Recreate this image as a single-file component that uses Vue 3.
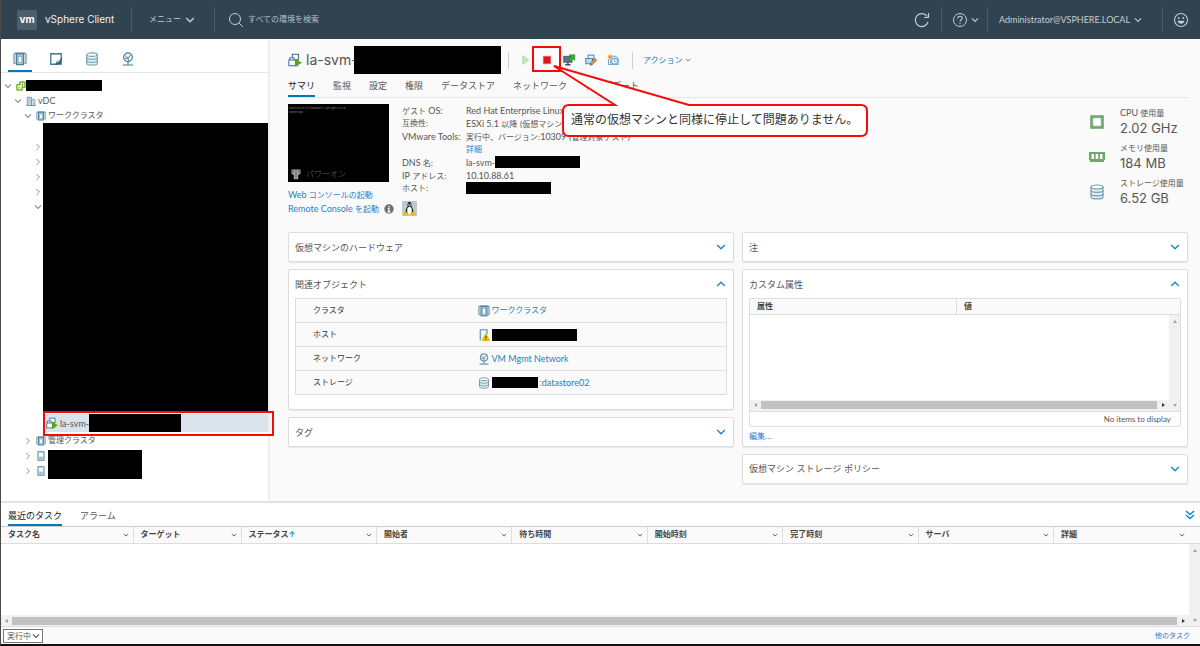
<template>
  <div class="page">
    <svg class="sprite" aria-hidden="true">
      <symbol id="chev" viewBox="0 0 10 10">
        <path d="M1.2 3 5 6.8 8.800 3" fill="none" stroke="currentColor" stroke-width="1.4" />
      </symbol>
      <symbol id="chev-up" viewBox="0 0 10 10">
        <path d="M1.2 7 5 3.200 8.800 7" fill="none" stroke="currentColor" stroke-width="1.4" />
      </symbol>
      <symbol id="chev-right" viewBox="0 0 10 10">
        <path d="M3 1.200 6.800 5 3 8.800" fill="none" stroke="currentColor" stroke-width="1.2" />
      </symbol>
      <symbol id="cluster" viewBox="0 0 16 16">
        <path d="M3 2H1v11h2M13 2h2v11h-2" fill="#bfd3de" stroke="#5d8ba5" />
        <rect x="4" y="2" width="8" height="12.500" fill="#a9c5d3" stroke="#4a7d97" stroke-width="1.400" />
        <path d="M2 1.200h12" stroke="#4a7d97" stroke-width="1.200" />
        <rect x="6" y="5" width="4" height="7" fill="#fff" stroke="#7fa5b9" stroke-width=".8" />
      </symbol>
      <symbol id="host" viewBox="0 0 16 16">
        <rect x="3" y="1" width="10" height="14" fill="#c4d8e2" stroke="#6f97ac" stroke-width="1.500" />
        <rect x="5" y="3.500" width="6" height="5" fill="#fff" />
        <path d="M5.500 11.500h5" stroke="#6f97ac" stroke-width="1.400" />
      </symbol>
      <symbol id="host-warn" viewBox="0 0 16 16">
        <path d="M3 15V1h9v6" fill="#eef4f7" stroke="#5d8ba5" stroke-width="1.500" />
        <path d="M10.500 6 16 15.500H5z" fill="#f5c400" stroke="#c79500" stroke-width=".6" />
        <path d="M10.500 9v3.500M10.500 13.300v1.200" stroke="#333" stroke-width="1.300" />
      </symbol>
      <symbol id="note" viewBox="0 0 16 16">
        <path d="M2 2h12v7l-5 5H2z" fill="none" stroke="#417691" stroke-width="1.500" />
        <path d="M14.500 6.500v8H7l2-4.500 3-1z" fill="#2e6480" />
        <path d="M9 12 12 9" stroke="#fff" stroke-width="1.200" />
      </symbol>
      <symbol id="disks" viewBox="0 0 16 16">
        <path d="M2 3v10c0 2.600 12 2.600 12 0V3" fill="#e3edf2" stroke="#6f9ab0" stroke-width="1.200" />
        <ellipse cx="8" cy="3" rx="6" ry="2" fill="#fff" stroke="#6f9ab0" stroke-width="1.200" />
        <path d="M2 6.500c0 2.400 12 2.400 12 0M2 10c0 2.400 12 2.400 12 0" fill="none" stroke="#6f9ab0" stroke-width="1.200" />
      </symbol>
      <symbol id="network" viewBox="0 0 16 16">
        <circle cx="8" cy="6" r="5" fill="#e8f0f4" stroke="#4a7d97" stroke-width="1.300" />
        <path d="M4.500 4 8 7l3.500-4M8 7l1 3.500M4 8l4-1" fill="none" stroke="#4a7d97" />
        <path d="M8 11v3.500M2 14.800h12" stroke="#4a7d97" stroke-width="1.300" />
      </symbol>
      <symbol id="vcenter" viewBox="0 0 16 16">
        <rect x="6" y="1.500" width="8.500" height="8.500" rx="1" fill="#fff" stroke="#6dbb20" stroke-width="2.400" />
        <rect x="1.500" y="6" width="8.500" height="8.500" rx="1" fill="#fff" stroke="#6dbb20" stroke-width="2.400" />
        <rect x="6.500" y="6" width="3" height="3" fill="#fff" />
        <path d="M9 3.500h3v3H9zM4 9h3v3H4z" fill="#f7a823" />
      </symbol>
      <symbol id="datacenter" viewBox="0 0 16 16">
        <path d="M2 15V2h7v13z" fill="#d3e1e9" stroke="#5d8ba5" stroke-width="1.300" />
        <path d="M9 15V6h5v9z" fill="#eef4f7" stroke="#5d8ba5" stroke-width="1.300" />
        <path d="M4 5h3M4 8h3M4 11h3M11 9h1.500M11 12h1.500M0 15h16" stroke="#5d8ba5" />
      </symbol>
      <symbol id="vm" viewBox="0 0 16 16">
        <rect x="5" y="1.500" width="7" height="6" fill="#fff" stroke="#4a7d97" stroke-width="1.300" />
        <rect x="2" y="5.500" width="5" height="5" fill="#fff" stroke="#4a7d97" stroke-width="1.200" />
        <rect x="1" y="8" width="10" height="6.500" fill="#fff" stroke="#4a7d97" stroke-width="1.300" />
        <path d="M8 6.500v9l8-4.500z" fill="#57a80b" />
      </symbol>
      <symbol id="console" viewBox="0 0 16 16">
        <rect x="1" y="3" width="11" height="8" fill="#5d7382" stroke="#39505f" />
        <path d="M6.500 11v2.500M3 14.300h7" stroke="#39505f" stroke-width="1.800" />
        <path d="M8 1h8v8l-2.500-2.500L10 10 7.500 7.500 11 4z" fill="#35b32b" stroke="#157a18" stroke-width=".6" />
      </symbol>
      <symbol id="vm-edit" viewBox="0 0 16 16">
        <rect x="4" y="1.500" width="8" height="6" fill="#e7f2fb" stroke="#3d88bd" stroke-width="1.300" />
        <rect x="1" y="6" width="9" height="7" fill="#b9dcf5" stroke="#3d88bd" stroke-width="1.300" />
        <path d="m7 15 1-3.500L13 6l2.500 2L10 14z" fill="#f2a530" stroke="#59351e" stroke-width=".8" />
      </symbol>
      <symbol id="snapshot" viewBox="0 0 16 16">
        <path d="M5 3h7l3 3v8H5z" fill="#dcecf7" stroke="#65a2cf" stroke-width="1.200" />
        <circle cx="10" cy="9.500" r="4" fill="#fff" stroke="#3e8dc7" stroke-width="1.200" />
        <path d="M10 7v3l2 .5M2 7v7h3" fill="none" stroke="#3e8dc7" />
        <path d="m4 0 1 2.300 2.500-.5L6 4l1.500 2L5 5.700 4 8 3 5.700.5 6 2 4 .5 1.800 3 2.300z" fill="#f39a1e" />
      </symbol>
    </svg>

    <header class="topbar">
      <span class="logo">vm</span>
      <span class="product">vSphere Client</span>
      <button class="menu">メニュー <svg class="i10"><use href="#chev" /></svg></button>
      <label class="search">
        <svg viewBox="0 0 16 16" class="i16">
          <circle cx="7" cy="7" r="5.500" fill="none" stroke="currentColor" />
          <path d="m11 11 4 4" stroke="currentColor" />
        </svg>
        <input type="text" placeholder="すべての環境を検索" aria-label="すべての環境を検索" />
      </label>
      <div class="topbar-right">
        <button class="refresh" aria-label="refresh">
          <svg viewBox="0 0 16 16" class="i16">
            <path d="M14 10a6.500 6.500 0 1 1-.8-5.500M14.500 1v4.500H10" fill="none" stroke="currentColor" stroke-width="1.200" />
          </svg>
        </button>
        <button class="help" aria-label="help">
          <svg viewBox="0 0 16 16" class="i16">
            <circle cx="8" cy="8" r="6.500" fill="none" stroke="currentColor" />
            <path d="M5.800 6.500C5.800 3.500 10.300 3.600 10.200 6.200 10.100 7.800 8 7.700 8 9.700M8 11v1.300" fill="none" stroke="currentColor" stroke-width="1.100" />
          </svg>
          <svg class="i8"><use href="#chev" /></svg>
        </button>
        <button class="user latin">Administrator@VSPHERE.LOCAL <svg class="i8"><use href="#chev" /></svg></button>
        <button class="smile" aria-label="feedback">
          <svg viewBox="0 0 16 16" class="i16">
            <circle cx="8" cy="8" r="6.500" fill="none" stroke="currentColor" stroke-width="1.100" />
            <path d="M4.500 8.800h7c-.5 4-6.500 4-7 0z" fill="currentColor" />
            <circle cx="5.700" cy="6" r=".9" fill="currentColor" />
            <circle cx="10.300" cy="6" r=".9" fill="currentColor" />
          </svg>
        </button>
      </div>
    </header>

    <div class="body">
      <aside class="sidebar">
        <nav class="side-tabs">
          <button v-for="(icon, i) in sideTabs" :key="icon" :class="{ active: i === 0 }" :aria-label="icon">
            <svg class="i14"><use :href="`#${icon}`" /></svg>
          </button>
        </nav>
        <div class="tree">
          <div class="node">
            <svg class="i8"><use href="#chev" /></svg>
            <svg class="i10"><use href="#vcenter" /></svg>
            <span class="mask mask-vc"></span>
          </div>
          <div class="node lv1">
            <svg class="i8"><use href="#chev" /></svg>
            <svg class="i10"><use href="#datacenter" /></svg>
            <span class="latin">vDC</span>
          </div>
          <div class="node lv2">
            <svg class="i8"><use href="#chev" /></svg>
            <svg class="i10"><use href="#cluster" /></svg>
            <span>ワーククラスタ</span>
          </div>
          <div class="hidden-nodes">
            <div class="chevs">
              <svg v-for="n in 4" :key="n" class="i8"><use href="#chev-right" /></svg>
              <svg class="i8"><use href="#chev" /></svg>
            </div>
            <div class="mask"></div>
          </div>
          <div class="node selected">
            <svg class="i12"><use href="#vm" /></svg>
            <span class="latin">la-svm-</span>
            <span class="mask mask-vm"></span>
            <span class="mark"></span>
          </div>
          <div class="node lv2">
            <svg class="i8"><use href="#chev-right" /></svg>
            <svg class="i10"><use href="#cluster" /></svg>
            <span>管理クラスタ</span>
          </div>
          <div class="node-group">
            <div>
              <div v-for="n in 2" :key="n" class="node lv2">
                <svg class="i8"><use href="#chev-right" /></svg>
                <svg class="i10"><use href="#host" /></svg>
              </div>
            </div>
            <span class="mask mask-hosts"></span>
          </div>
        </div>
      </aside>

      <main class="main">
        <div class="title-row">
          <svg class="i14"><use href="#vm" /></svg>
          <h1>la-svm-</h1>
          <span class="mask mask-title"></span>
          <div class="tools">
            <button aria-label="power on">
              <svg viewBox="0 0 16 16" class="i12"><path d="M5 2v12l8-6z" fill="#c5e8b7" stroke="#a5d795" /></svg>
            </button>
            <button class="stop" aria-label="power off">
              <svg viewBox="0 0 16 16" class="i12">
                <rect x="3" y="3" width="10" height="10" fill="#d9161c" stroke="#e96a62" />
              </svg>
              <span class="mark"></span>
            </button>
            <button v-for="icon in tools" :key="icon" :aria-label="icon">
              <svg class="i12"><use :href="`#${icon}`" /></svg>
            </button>
          </div>
          <button class="action">アクション <svg class="i6"><use href="#chev" /></svg></button>
        </div>

        <nav class="tabs">
          <button v-for="(tab, i) in tabs" :key="tab" :class="{ active: i === 0 }">{{ tab }}</button>
        </nav>

        <section class="summary">
          <div class="preview">
            <div class="screen">
              <p>Express Security for Virtualization 3.x Light Agent 3.1.20.291</p>
              <p>localhost login:</p>
              <div class="power">
                <svg viewBox="0 0 16 16" class="i12">
                  <path d="M2 2h12v6l-3 1v6H5V9L2 8z" fill="#aaa" />
                  <path d="M8 3v11M4 2v5M12 2v5" stroke="#333" />
                </svg>
                パワーオン
              </div>
            </div>
            <a href="#"><span class="latin">Web</span> コンソールの起動</a>
            <div class="remote">
              <a href="#"><span class="latin">Remote Console</span> を起動</a>
              <svg viewBox="0 0 16 16" class="i10">
                <circle cx="8" cy="8" r="7.500" fill="#6e6e6e" />
                <path d="M8 3v2.500M6 7.500h2V12M5.500 12.500h5" fill="none" stroke="#fff" stroke-width="2" />
              </svg>
            </div>
          </div>
          <div class="details">
            <dl>
              <dt>ゲスト <span class="latin">OS:</span></dt>
              <dd class="latin">Red Hat Enterprise Linux</dd>
              <dt>互換性:</dt>
              <dd><span class="latin">ESXi 5.1</span> 以降 (仮想マシン</dd>
              <dt class="latin">VMware Tools:</dt>
              <dd>実行中、バージョン:<span class="latin">10309</span> (管理対象ゲスト)</dd>
              <dt></dt>
              <dd><a href="#">詳細</a></dd>
              <dt><span class="latin">DNS</span> 名:</dt>
              <dd><span class="latin">la-svm-</span><span class="mask mask-info"></span></dd>
              <dt><span class="latin">IP</span> アドレス:</dt>
              <dd class="latin">10.10.88.61</dd>
              <dt>ホスト:</dt>
              <dd><span class="mask mask-info"></span></dd>
            </dl>
            <svg class="tux" viewBox="0 0 16 16">
              <rect width="16" height="16" rx="1" fill="#b8cad5" />
              <path d="M8 1C5.500 1 6 4 6 5.500 5 7.500 3.500 9 4 13h8c.5-4-1-5.500-2-7.500C10 4 10.500 1 8 1z" fill="#161616" />
              <ellipse cx="8" cy="10" rx="2.500" ry="4" fill="#fff" />
              <path d="M6.500 4.500 8 4l1.500.5L8 6z" fill="#f3b51b" />
              <circle cx="7.200" cy="3.300" r=".6" fill="#fff" />
              <circle cx="8.900" cy="3.300" r=".6" fill="#fff" />
              <path d="M1.500 13 4 11l3 3-1.500 1.500-4-.5zM14.500 13 12 11l-3 3 1.500 1.500 4-.5z" fill="#f3b51b" />
            </svg>
          </div>
          <div class="stats">
            <div class="stat">
              <svg viewBox="0 0 16 16" class="i16">
                <rect x="2.500" y="2.500" width="11" height="11" fill="#fff" stroke="#75a874" stroke-width="2.600" />
                <path d="M4 1v14M12 1v14M1 4h14M1 12h14" stroke="#5d8f5d" stroke-width=".3" />
              </svg>
              <div><span><span class="latin">CPU</span> 使用量</span><strong>2.02 GHz</strong></div>
            </div>
            <div class="stat">
              <svg viewBox="0 0 16 16" class="i16">
                <path d="M0 3h16v8h-1v2H1v-2H0z" fill="#75a56f" />
                <path d="M2.500 5h2.500v5H2.500zM6.700 5h2.500v5H6.700zM11 5h2.500v5H11z" fill="#fff" />
              </svg>
              <div><span>メモリ使用量</span><strong>184 MB</strong></div>
            </div>
            <div class="stat">
              <svg class="i16"><use href="#disks" /></svg>
              <div><span>ストレージ使用量</span><strong>6.52 GB</strong></div>
            </div>
          </div>
        </section>

        <div class="cards">
          <div class="col">
            <section class="card">
              <button class="card-head">仮想マシンのハードウェア <svg class="i10"><use href="#chev" /></svg></button>
            </section>
            <section class="card related">
              <button class="card-head">関連オブジェクト <svg class="i10"><use href="#chev-up" /></svg></button>
              <table>
                <tbody>
                  <tr v-for="row in related" :key="row.label">
                    <th scope="row">{{ row.label }}</th>
                    <td>
                      <div class="obj">
                        <svg class="i12"><use :href="`#${row.icon}`" /></svg>
                        <span v-if="row.mask" class="mask" :class="row.mask"></span>
                        <a v-if="row.text" href="#" :class="{ latin: row.latin }">{{ row.text }}</a>
                      </div>
                    </td>
                  </tr>
                </tbody>
              </table>
            </section>
            <section class="card">
              <button class="card-head">タグ <svg class="i10"><use href="#chev" /></svg></button>
            </section>
          </div>

          <div class="col">
            <section class="card">
              <button class="card-head">注 <svg class="i10"><use href="#chev" /></svg></button>
            </section>
            <section class="card attrs">
              <button class="card-head">カスタム属性 <svg class="i10"><use href="#chev-up" /></svg></button>
              <div class="grid">
                <table>
                  <thead>
                    <tr><th scope="col">属性</th><th scope="col">値</th></tr>
                  </thead>
                </table>
                <div class="grid-body">
                  <div class="grid-content">
                    <div class="rows"></div>
                    <div class="hbar"><i class="arr left"></i><b></b><i class="arr right"></i></div>
                  </div>
                  <div class="vbar"><i class="arr up"></i><i class="arr down"></i></div>
                </div>
                <div class="grid-foot">No items to display</div>
              </div>
              <a href="#" class="edit">編集...</a>
            </section>
            <section class="card">
              <button class="card-head">仮想マシン ストレージ ポリシー <svg class="i10"><use href="#chev" /></svg></button>
            </section>
          </div>
        </div>

        <div class="callout">
          <svg viewBox="0 0 320 76">
            <path d="M18 42H64L3 3 138 42H310Q316 42 316 48V67Q316 73 310 73H18Q12 73 12 67V48Q12 42 18 42Z" fill="#fff" stroke="#f60b0b" stroke-width="2" />
          </svg>
          <p>通常の仮想マシンと同様に停止して問題ありません。</p>
        </div>
      </main>
    </div>

    <section class="tasks">
      <div class="task-tabs">
        <button class="active">最近のタスク</button>
        <button>アラーム</button>
        <button class="collapse" aria-label="collapse">
          <svg viewBox="0 0 10 10" class="i10">
            <path d="m1 1 4 3.500L9 1M1 5l4 3.500L9 5" fill="none" stroke="currentColor" stroke-width="1.400" />
          </svg>
        </button>
      </div>
      <table class="task-table">
        <thead>
          <tr>
            <th v-for="col in taskCols" :key="col" scope="col">
              <div>
                <span>{{ col }}<em v-if="col === 'ステータス'">↑</em></span>
                <svg class="i6"><use href="#chev" /></svg>
              </div>
            </th>
            <td class="gutter"></td>
          </tr>
        </thead>
      </table>
      <div class="grid-body">
        <div class="grid-content">
          <div class="rows"></div>
          <div class="hbar"><i class="arr left"></i><b></b><i class="arr right"></i></div>
        </div>
        <div class="vbar"><i class="arr up"></i><i class="arr down"></i></div>
      </div>
      <footer class="task-foot">
        <div class="select">
          <select v-model="filter" aria-label="タスクの状態">
            <option>実行中</option>
          </select>
          <svg class="i8"><use href="#chev" /></svg>
        </div>
        <a href="#">他のタスク</a>
      </footer>
    </section>
  </div>
</template>

<script setup>
import { ref } from 'vue';

const filter = ref('実行中');

const sideTabs = ['cluster', 'note', 'disks', 'network'];
const tools = ['console', 'vm-edit', 'snapshot'];
const tabs = ['サマリ', '監視', '設定', '権限', 'データストア', 'ネットワーク', 'アップデート'];

const related = [
  { label: 'クラスタ', icon: 'cluster', text: 'ワーククラスタ' },
  { label: 'ホスト', icon: 'host-warn', mask: 'mask-host' },
  { label: 'ネットワーク', icon: 'network', text: 'VM Mgmt Network', latin: true },
  { label: 'ストレージ', icon: 'disks', mask: 'mask-store', text: ':datastore02', latin: true }
];

const taskCols = ['タスク名', 'ターゲット', 'ステータス', '開始者', '待ち時間', '開始時刻', '完了時刻', 'サーバ', '詳細'];
</script>

<style>
body {
  margin: 0;
}
</style>

<style scoped>
* {
  box-sizing: border-box;
}

.page {
  min-height: 100vh;
  display: flex;
  flex-direction: column;
  background: #fafafa;
  border-left: 1px solid #4a4a4a;
  border-bottom: 2px solid #111;
  color: #565656;
  font-family: Inter, "Noto Sans CJK JP", sans-serif;
  font-size: 8px;
  line-height: 13px;
}

.sprite {
  position: absolute;
  width: 0;
  height: 0;
}

svg {
  flex: none;
  display: block;
}

.i6 { width: 6px; height: 6px; }
.i8 { width: 8px; height: 8px; }
.i10 { width: 10px; height: 10px; }
.i12 { width: 12px; height: 12px; }
.i14 { width: 14px; height: 14px; }
.i16 { width: 16px; height: 16px; }

button,
input,
select {
  font: inherit;
  color: inherit;
  background: none;
  border: 0;
  padding: 0;
  margin: 0;
}

button {
  display: flex;
  align-items: center;
}

a {
  color: #2a7fd0;
  text-decoration: none;
}

p,
h1,
dl,
dd {
  margin: 0;
}

.latin {
  font-family: Lato, "Noto Sans CJK JP", sans-serif;
  font-size: 9px;
}

/* blacked-out names */
.mask {
  display: block;
  flex: none;
  background: #000;
}

.mark {
  position: absolute;
  border: 2px solid #f60b0b;
}

/* top bar */
.topbar {
  height: 39px;
  display: flex;
  align-items: center;
  padding-left: 16px;
  background: #314351;
  color: #c3ccd3;
}

.logo {
  width: 20px;
  height: 20px;
  margin-right: 8px;
  border-radius: 2px;
  background: #4e5e6b;
  color: #fff;
  font-size: 10px;
  font-weight: 700;
  line-height: 19px;
  text-align: center;
}

.product {
  width: 86px;
  color: #eef1f3;
  font-size: 10px;
  white-space: nowrap;
}

.menu,
.search,
.help,
.user,
.smile {
  height: 25px;
  border-left: 1px solid #4a5b68;
}

.menu {
  width: 83px;
  padding-left: 17px;
  gap: 4px;
}

.search {
  display: flex;
  flex: 1;
  align-items: center;
  gap: 4px;
  padding-left: 13px;
}

.search input {
  flex: 1;
  outline: 0;
}

.search input::placeholder {
  color: #b4bfc8;
  opacity: 1;
}

.topbar-right {
  display: flex;
  align-items: center;
}

.refresh {
  width: 27px;
}

.help {
  width: 46px;
  padding-left: 10px;
  gap: 3px;
}

.user {
  width: 175px;
  padding-left: 11px;
  gap: 4px;
}

.smile {
  width: 38px;
  padding-left: 10px;
}

/* layout */
.body {
  flex: 1;
  display: flex;
}

.sidebar {
  position: relative;
  z-index: 1;
  width: 269px;
  flex: none;
  background: #fff;
  border-right: 2px solid #eee;
}

.side-tabs {
  display: flex;
  gap: 12px;
  height: 34px;
  padding-left: 7px;
  border-bottom: 1px solid #e4e4e4;
}

.side-tabs button {
  width: 24px;
  justify-content: center;
  padding-top: 8px;
  border-bottom: 2px solid transparent;
}

.side-tabs .active {
  border-color: #0079b8;
}

.tree {
  padding-top: 5px;
}

.node {
  display: flex;
  align-items: center;
  gap: 2px;
  height: 15px;
  padding-left: 3px;
  white-space: nowrap;
}

.node .i8,
.chevs {
  color: #8c8c8c;
}

.node .i8 {
  margin-right: 2px;
}

.lv1 { padding-left: 13px; }
.lv2 { padding-left: 23px; }

.mask-vc {
  width: 76px;
  height: 11px;
  margin-left: -2px;
}

.hidden-nodes {
  display: flex;
}

.hidden-nodes .mask {
  flex: 1;
  height: 289px;
}

.chevs {
  display: flex;
  flex-direction: column;
  gap: 7px;
  width: 42px;
  padding: 20px 0 0 33px;
}

.selected {
  position: relative;
  height: 18px;
  margin: 2px 0 1px 42px;
  background: #d9e4ea;
}

.mask-vm {
  width: 92px;
  height: 18px;
  margin-left: -2px;
}

.selected .mark {
  inset: -3px -6px -4px 0;
}

.node-group {
  display: flex;
  gap: 2px;
}

.mask-hosts {
  width: 94px;
  height: 29px;
  margin-top: 2px;
}

/* main pane */
.main {
  position: relative;
  flex: 1;
  min-width: 0;
  padding: 7px 12px 10px 18px;
}

.title-row {
  display: flex;
  align-items: center;
  height: 28px;
}

h1 {
  width: 48px;
  margin-left: 4px;
  font-size: 14px;
  font-weight: 400;
  line-height: 20px;
  white-space: nowrap;
}

.mask-title {
  width: 147px;
  height: 28px;
}

.tools {
  display: flex;
  gap: 10px;
  height: 17px;
  margin-left: 7px;
  padding: 0 13px 0 10px;
  border: 1px solid #d0d0d0;
  border-width: 0 1px;
}

.stop {
  position: relative;
}

.stop .mark {
  inset: -6px -8px -3px -9px;
}

.action {
  gap: 2px;
  margin-left: 10px;
  color: #1c7fb8;
}

.tabs {
  display: flex;
  gap: 18px;
  height: 24px;
  border-bottom: 1px solid #e4e4e4;
  font-size: 9px;
}

.tabs button {
  padding-top: 2px;
  border-bottom: 2px solid transparent;
  white-space: nowrap;
}

.tabs .active {
  border-color: #0079b8;
  color: #222;
}

.summary {
  display: flex;
  height: 134px;
  padding-top: 6px;
}

.preview {
  width: 114px;
}

.preview a {
  white-space: nowrap;
}

.screen {
  display: flex;
  flex-direction: column;
  width: 101px;
  height: 78px;
  margin-bottom: 6px;
  padding: 2px 1px;
  background: #000;
  color: #888;
  font-size: 2px;
  line-height: 4px;
}

.power {
  display: flex;
  align-items: center;
  gap: 4px;
  margin-top: auto;
  padding-left: 1px;
  color: #444;
  font-size: 8px;
  line-height: 12px;
}

.remote {
  display: flex;
  align-items: center;
  gap: 5px;
}

dl {
  display: grid;
  grid-template-columns: 64px auto;
  grid-auto-rows: 13px;
}

dt,
dd {
  white-space: nowrap;
}

.mask-info {
  display: inline-block;
  width: 85px;
  height: 12px;
  vertical-align: top;
}

.tux {
  width: 15px;
  height: 15px;
  margin-top: 6px;
}

.stats {
  display: flex;
  flex-direction: column;
  gap: 4px;
  margin-left: auto;
  padding-top: 2px;
}

.stat {
  display: flex;
  align-items: center;
  gap: 15px;
  height: 31px;
}

.stat > div {
  width: 68px;
  white-space: nowrap;
}

.stat strong {
  display: block;
  font-size: 13px;
  font-weight: 400;
  line-height: 17px;
}

/* cards */
.cards {
  display: grid;
  grid-template-columns: 1fr 1fr;
  gap: 8px;
}

.col {
  display: flex;
  flex-direction: column;
  gap: 7px;
}

.card {
  padding: 0 6px;
  background: #fff;
  border: 1px solid #ddd;
  border-radius: 2px;
  box-shadow: 0 1px 1px #e6e6e6;
}

.card-head {
  width: 100%;
  height: 28px;
  justify-content: space-between;
  font-size: 9px;
}

.card-head svg {
  margin-right: 1px;
  color: #1b8ac6;
}

table {
  width: 100%;
  border-collapse: collapse;
  table-layout: fixed;
}

th {
  padding: 0;
  text-align: left;
}

.related {
  padding-bottom: 14px;
}

.related table {
  background: #fafafa;
  border: 1px solid #ddd;
}

.related tr {
  height: 24px;
  border-top: 1px solid #ddd;
}

.related th {
  width: 182px;
  padding-left: 17px;
  font-weight: 400;
  color: #333;
}

.related td {
  padding: 0;
}

.obj {
  display: flex;
  align-items: center;
  gap: 2px;
}

.obj a {
  color: #2482bd;
}

.mask-host {
  width: 85px;
  height: 12px;
}

.mask-store {
  width: 46px;
  height: 11px;
}

.grid {
  border: 1px solid #ddd;
  border-radius: 2px;
}

.grid th {
  height: 15px;
  padding-left: 7px;
  background: #fafafa;
  border-bottom: 1px solid #ddd;
  color: #444;
}

.grid th:first-child {
  width: 48%;
}

.grid th + th {
  border-left: 1px solid #ddd;
}

.grid-body {
  display: flex;
  height: 96px;
  background: #fff;
}

.grid-content {
  flex: 1;
  display: flex;
  flex-direction: column;
}

.rows {
  flex: 1;
}

.hbar {
  display: flex;
  align-items: center;
  justify-content: space-between;
  height: 11px;
  padding: 0 4px;
  background: #f1f1f1;
}

.hbar b {
  flex: 1;
  height: 8px;
  margin: 0 5px 0 4px;
  background: #c1c1c1;
}

.vbar {
  display: flex;
  flex-direction: column;
  align-items: center;
  justify-content: space-between;
  width: 11px;
  padding: 5px 0 4px;
  background: #f1f1f1;
}

.arr {
  border: 2px solid transparent;
}

.left {
  border-right: 3px solid #a3a3a3;
  border-left: 0;
}

.right {
  border-left: 3px solid #333;
  border-right: 0;
}

.up {
  border-bottom: 3px solid #a3a3a3;
  border-top: 0;
}

.down {
  border-top: 3px solid #a3a3a3;
  border-bottom: 0;
}

.grid-foot {
  height: 15px;
  padding-right: 9px;
  border-top: 1px solid #ddd;
  font-family: Lato, sans-serif;
  line-height: 14px;
  text-align: right;
}

.edit {
  display: block;
  padding: 3px 0;
}

/* note pointing at the stop button */
.callout {
  position: absolute;
  top: 24px;
  left: 281px;
  width: 320px;
  height: 76px;
}

.callout p {
  position: absolute;
  top: 48px;
  left: 20px;
  color: #333;
  font-size: 12px;
  line-height: 18px;
  white-space: nowrap;
}

/* recent tasks */
.tasks {
  background: #fff;
  border-top: 2px solid #e2e2e2;
}

.task-tabs {
  display: flex;
  gap: 18px;
  height: 24px;
  padding: 0 5px 0 7px;
  border-bottom: 1px solid #ccc;
  font-size: 9px;
}

.task-tabs button {
  padding-top: 4px;
  border-bottom: 2px solid transparent;
}

.task-tabs .active {
  border-color: #0079b8;
  color: #222;
}

.task-tabs .collapse {
  margin-left: auto;
  color: #0a84cc;
}

.task-table th,
.gutter {
  height: 17px;
  background: #fafafa;
  border-bottom: 1px solid #ddd;
  color: #444;
}

.task-table th {
  padding: 0 4px 0 7px;
}

.task-table th + th {
  border-left: 1px solid #ddd;
}

.task-table th:nth-child(1) { width: 132px; }
.task-table th:nth-child(2) { width: 108px; }

.gutter {
  width: 11px;
  padding: 0;
}

.task-table div {
  display: flex;
  align-items: center;
  justify-content: space-between;
}

.task-table em {
  color: #1b8ac6;
  font-style: normal;
}

.tasks .grid-body {
  height: 82px;
}

.task-foot {
  display: flex;
  align-items: center;
  justify-content: space-between;
  height: 18px;
  padding: 0 10px 0 2px;
  background: #fafafa;
  border-top: 1px solid #ddd;
}

.select {
  position: relative;
  display: flex;
}

.select select {
  width: 40px;
  height: 14px;
  padding-left: 3px;
  appearance: none;
  background: #fff;
  border: 1px solid #767676;
  line-height: 12px;
}

.select svg {
  position: absolute;
  top: 3px;
  right: 3px;
}

.task-foot a {
  font-size: 7px;
}
</style>
